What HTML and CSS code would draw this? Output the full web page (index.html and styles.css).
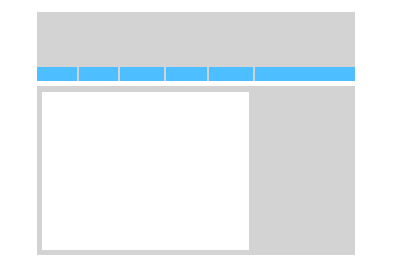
FILE: index.html
```html
<!DOCTYPE html>
<html>
<head>
<meta charset="utf-8">
<link rel="stylesheet" href="styles.css">
</head>
<body>
<div class="page">
  <header class="header">
    <div class="banner"></div>
    <nav class="nav">
      <div class="tab t1"></div>
      <div class="tab t2"></div>
      <div class="tab t3"></div>
      <div class="tab t4"></div>
      <div class="tab t5"></div>
      <div class="tab rest"></div>
    </nav>
  </header>
  <main class="main">
    <section class="content"></section>
  </main>
</div>
</body>
</html>
```
FILE: styles.css
```css
html, body {
  margin: 0;
  padding: 0;
  background: #ffffff;
  font-family: "Liberation Sans", Arial, sans-serif;
}
.page {
  width: 318px;
  margin: 12px 0 0 37px;
  display: flex;
  flex-direction: column;
  gap: 5px;
}
.header {
  background: #d3d3d3;
  display: flex;
  flex-direction: column;
}
.banner {
  height: 55px;
}
.nav {
  display: flex;
  gap: 2px;
  height: 14px;
}
.tab {
  background: #4dbeff;
}
.t1 { width: 40px; }
.t2 { width: 39px; }
.t3 { width: 44px; }
.t4 { width: 41px; }
.t5 { width: 44px; }
.rest { flex: 1; }
.main {
  background: #d3d3d3;
  height: 169px;
  box-sizing: border-box;
  padding: 6px 0 5px 5px;
  display: flex;
}
.content {
  background: #ffffff;
  width: 207px;
}
```
